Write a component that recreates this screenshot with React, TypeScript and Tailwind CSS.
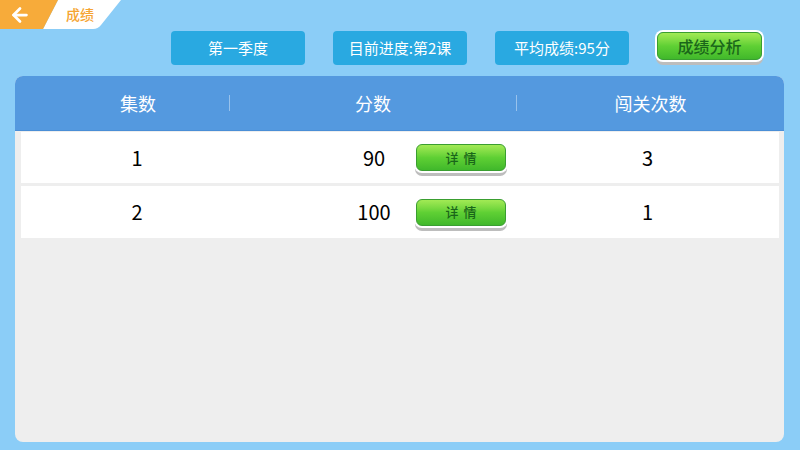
import React from 'react';
import { ArrowLeft } from 'lucide-react';

const font = { fontFamily: '"Noto Sans CJK SC", "Noto Sans", sans-serif' };

const rows = [
  { ep: '1', score: '90', tries: '3' },
  { ep: '2', score: '100', tries: '1' },
];

function GreenButton({ label, className }: { label: string; className: string }) {
  return (
    <button
      className={`flex items-center justify-center rounded-[6px] border border-[#3a9e30] bg-gradient-to-b from-[#a2ea55] via-[#5fd034] to-[#40b82b] font-medium text-[#1a661a] shadow-[0_0_0_2px_#ffffff,0_4px_0_1px_#bdbdbd] ${className}`}
    >
      {label}
    </button>
  );
}

function InfoBox({ label }: { label: string }) {
  return (
    <div className="flex h-[34px] w-[134px] items-center justify-center rounded-[4px] bg-[#29a9e1] text-[15px] text-white">
      {label}
    </div>
  );
}

export default function App() {
  return (
    <div className="flex h-[450px] w-[800px] flex-col overflow-hidden bg-[#8bcdf7]" style={font}>
      {/* top tab */}
      <div className="relative flex h-[29px] w-[122px] items-center">
        <svg className="absolute inset-0" width="122" height="29" viewBox="0 0 122 29">
          <path d="M58 0 H121 L101 25 Q98 29 93 29 H43 Z" fill="#ffffff" />
          <path d="M0 0 H58 L43 29 H0 Z" fill="#f7ab3a" />
        </svg>
        <ArrowLeft className="relative ml-[9px] text-white" size={22} strokeWidth={3} />
        <span className="relative ml-[35px] text-[14px] font-medium text-[#f5a432]">成绩</span>
      </div>

      {/* info row */}
      <div className="mt-[2px] flex h-[34px] items-center pl-[171px]">
        <InfoBox label="第一季度" />
        <div className="w-[28px]" />
        <InfoBox label="目前进度:第2课" />
        <div className="w-[28px]" />
        <InfoBox label="平均成绩:95分" />
        <div className="w-[28px]" />
        <GreenButton label="成绩分析" className="mb-[4px] h-[28px] w-[105px] text-[16px]" />
      </div>

      {/* table */}
      <div className="ml-[15px] mt-[11px] flex h-[366px] w-[769px] flex-col overflow-hidden rounded-[8px] bg-[#eeeeee]">
        <div className="flex h-[55px] shrink-0 items-center border-b border-[#4a8ed6] bg-[#5499df] text-[18px] text-white">
          <div className="flex w-[214px] justify-center pl-[32px]">集数</div>
          <div className="h-[16px] w-px bg-white/40" />
          <div className="flex w-[286px] justify-center">分数</div>
          <div className="h-[16px] w-px bg-white/40" />
          <div className="flex flex-1 justify-center">闯关次数</div>
        </div>

        <div className="mt-px flex flex-col gap-[3px] pl-[6px] pr-[5px]">
          {rows.map((r, i) => (
            <div
              key={i}
              className={`flex items-center bg-white text-[20px] text-black ${i === 0 ? 'h-[51px]' : 'h-[52px]'}`}
            >
              <div className="flex w-[208px] justify-center pl-[24px]">{r.ep}</div>
              <div className="flex w-[287px] items-center pl-[107px]">
                <span className="w-[76px] text-center">{r.score}</span>
                <GreenButton label="详情" className="ml-[4px] h-[27px] w-[90px] pl-[5px] text-[13px] tracking-[5px]" />
              </div>
              <div className="flex flex-1 justify-center">{r.tries}</div>
            </div>
          ))}
        </div>
      </div>
    </div>
  );
}
